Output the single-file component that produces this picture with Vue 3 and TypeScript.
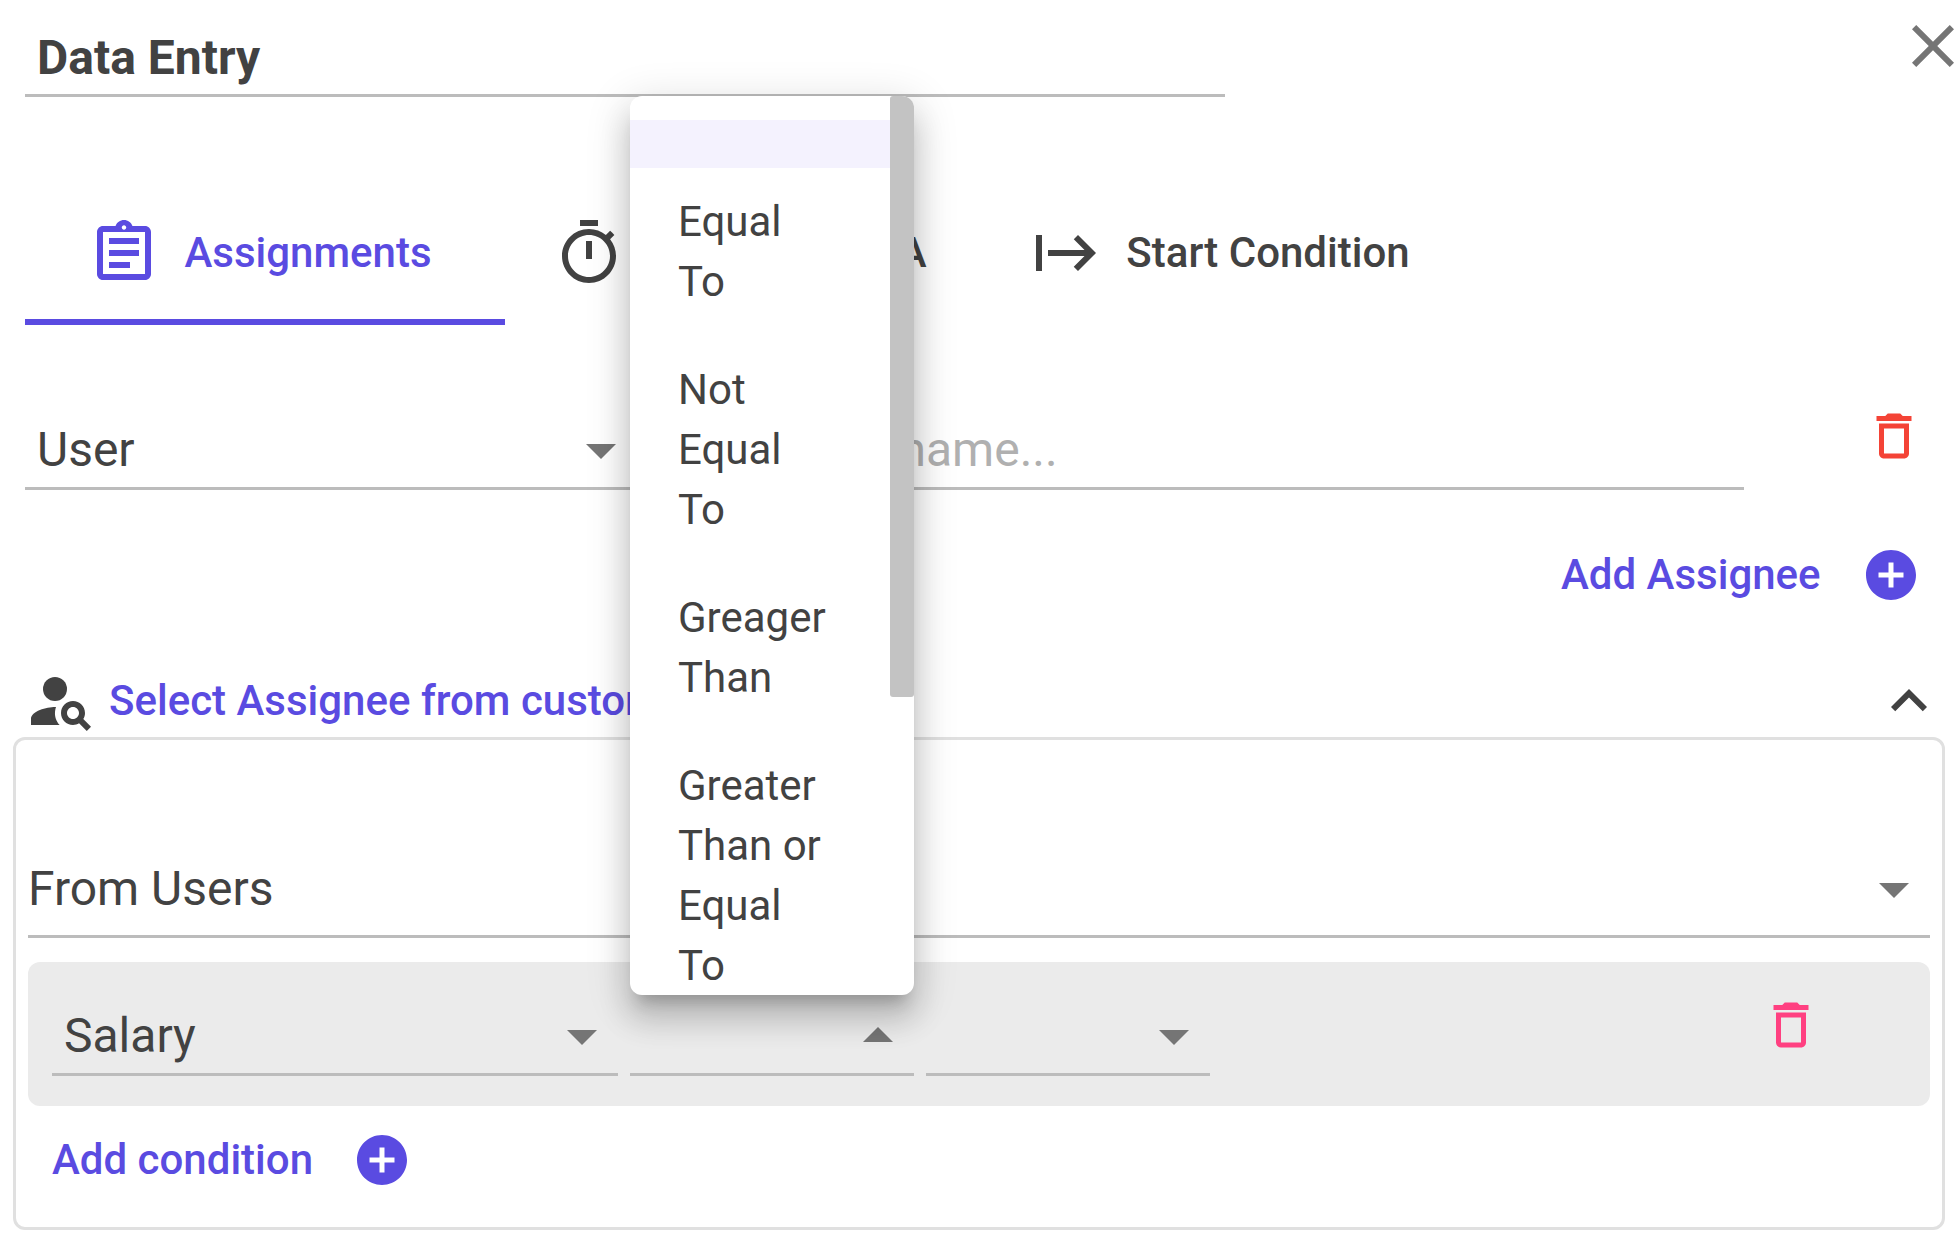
<script setup lang="ts">
import { ref } from 'vue'

interface Tab {
  id: string
  label: string
  icon: string
}

const tabs: Tab[] = [
  {
    id: 'assignments',
    label: 'Assignments',
    icon: 'M7 15h7v2H7zm0-4h10v2H7zm0-4h10v2H7zm12-4h-4.18C14.4 1.84 13.3 1 12 1c-1.3 0-2.4.84-2.82 2H5c-1.1 0-2 .9-2 2v14c0 1.1.9 2 2 2h14c1.1 0 2-.9 2-2V5c0-1.1-.9-2-2-2zm-7-.25c.41 0 .75.34.75.75s-.34.75-.75.75-.75-.34-.75-.75.34-.75.75-.75zM19 19H5V5h14v14z',
  },
  {
    id: 'deadline',
    label: 'Timer and SLA',
    icon: 'M15 1H9v2h6V1zm-4 13h2V8h-2v6zm8.03-6.61 1.42-1.42c-.43-.51-.9-.99-1.41-1.41l-1.42 1.42C16.07 4.74 14.12 4 12 4c-4.97 0-9 4.03-9 9s4.02 9 9 9 9-4.03 9-9c0-2.12-.74-4.07-1.97-5.61zM12 20c-3.87 0-7-3.13-7-7s3.13-7 7-7 7 3.13 7 7-3.13 7-7 7z',
  },
  {
    id: 'start',
    label: 'Start Condition',
    icon: 'M14.59 7.41 18.17 11H6v2h12.17l-3.59 3.59L16 18l6-6-6-6-1.41 1.41zM2 6v12h2V6H2z',
  },
]

const trashIcon =
  'M6 19c0 1.1.9 2 2 2h8c1.1 0 2-.9 2-2V7H6v12zM8 9h8v10H8V9zm7.5-5-1-1h-5l-1 1H5v2h14V4h-3.5z'
const addIcon =
  'M12 2C6.48 2 2 6.48 2 12s4.48 10 10 10 10-4.48 10-10S17.52 2 12 2zm5 11h-4v4h-2v-4H7v-2h4V7h2v4h4v2z'

const operators: string[] = [
  '',
  'Equal\nTo',
  'Not\nEqual\nTo',
  'Greager\nThan',
  'Greater\nThan or\nEqual\nTo',
]

const title = ref('Data Entry')
const activeTab = ref('assignments')
const assigneeType = ref('User')
const assigneeName = ref('')
const source = ref('From Users')
const attribute = ref('Salary')
const operator = ref('')
const operand = ref('')
const menuOpen = ref(true)

function choose(value: string): void {
  operator.value = value
  menuOpen.value = false
}
</script>

<template>
  <main class="dialog">
    <header class="head">
      <input v-model="title" class="title" type="text" aria-label="Step name" />
      <button class="icon-btn close" type="button" aria-label="Close">
        <svg viewBox="5 5 14 14" width="42" height="42">
          <path d="M19 6.41 17.59 5 12 10.59 6.41 5 5 6.41 10.59 12 5 17.59 6.41 19 12 13.41 17.59 19 19 17.59 13.41 12z" />
        </svg>
      </button>
    </header>

    <div class="tabs" role="tablist">
      <button
        v-for="tab in tabs"
        :key="tab.id"
        class="tab"
        :class="{ active: tab.id === activeTab }"
        type="button"
        role="tab"
        :aria-selected="tab.id === activeTab"
        @click="activeTab = tab.id"
      >
        <svg viewBox="0 0 24 24" width="72" height="72"><path :d="tab.icon" /></svg>
        <span>{{ tab.label }}</span>
      </button>
    </div>

    <div class="assignee">
      <div class="field">
        <select v-model="assigneeType" aria-label="Assignee type">
          <option>User</option>
        </select>
        <svg class="arrow" viewBox="0 0 30 18" width="30" height="18"><path d="M0 3h30L15 18z" /></svg>
      </div>
      <div class="field">
        <input v-model="assigneeName" type="text" placeholder="Type user's name..." aria-label="User name" />
      </div>
      <button class="icon-btn red" type="button" aria-label="Remove assignee">
        <svg viewBox="0 0 24 24" width="60" height="60"><path :d="trashIcon" /></svg>
      </button>
    </div>

    <button class="add add-assignee" type="button">
      <span>Add Assignee</span>
      <svg viewBox="0 0 24 24" width="60" height="60"><path :d="addIcon" /></svg>
    </button>

    <button class="section-head" type="button" aria-expanded="true">
      <svg viewBox="0 0 24 24" width="72" height="72">
        <circle cx="10" cy="8" r="4" />
        <path d="M10.35 14.01C7.62 13.91 2 15.27 2 18v2h9.54c-2.47-2.76-1.23-5.89-1.19-5.99zM19.43 18.02C19.79 17.43 20 16.74 20 16c0-2.21-1.79-4-4-4s-4 1.79-4 4 1.79 4 4 4c.74 0 1.43-.22 2.02-.57L20.59 22 22 20.59l-2.57-2.57zM16 18c-1.1 0-2-.9-2-2s.9-2 2-2 2 .9 2 2-.9 2-2 2z" />
      </svg>
      <span>Select Assignee from custom field</span>
      <svg class="chevron" viewBox="0 0 24 24" width="72" height="72">
        <path d="M12 8l-6 6 1.41 1.41L12 10.83l4.59 4.58L18 14z" />
      </svg>
    </button>

    <section class="card">
      <div class="field source">
        <select v-model="source" aria-label="Source">
          <option>From Users</option>
        </select>
        <svg class="arrow" viewBox="0 0 30 18" width="30" height="18"><path d="M0 3h30L15 18z" /></svg>
      </div>

      <div class="condition">
        <div class="field">
          <select v-model="attribute" aria-label="Attribute">
            <option>Salary</option>
          </select>
          <svg class="arrow" viewBox="0 0 30 18" width="30" height="18"><path d="M0 3h30L15 18z" /></svg>
        </div>
        <div class="field">
          <button
            class="opener"
            type="button"
            aria-haspopup="listbox"
            :aria-expanded="menuOpen"
            aria-label="Operator"
            @click="menuOpen = !menuOpen"
          >
            <svg class="arrow" viewBox="0 0 30 18" width="30" height="18"><path d="M0 15h30L15 0z" /></svg>
          </button>
          <div v-if="menuOpen" class="menu">
            <ul role="listbox" aria-label="Operator">
              <li
                v-for="item in operators"
                :key="item"
                role="option"
                :aria-selected="item === operator"
                :class="{ selected: item === operator }"
                @click="choose(item)"
              >{{ item }}</li>
            </ul>
            <span class="thumb"></span>
          </div>
        </div>
        <div class="field">
          <select v-model="operand" aria-label="Value">
            <option value=""></option>
          </select>
          <svg class="arrow" viewBox="0 0 30 18" width="30" height="18"><path d="M0 3h30L15 18z" /></svg>
        </div>
        <button class="icon-btn pink" type="button" aria-label="Remove condition">
          <svg viewBox="0 0 24 24" width="60" height="60"><path :d="trashIcon" /></svg>
        </button>
      </div>

      <button class="add add-condition" type="button">
        <span>Add condition</span>
        <svg viewBox="0 0 24 24" width="60" height="60"><path :d="addIcon" /></svg>
      </button>
    </section>
  </main>
</template>

<style>
body {
  margin: 0;
  background: #fff;
}
</style>

<style scoped>
.dialog {
  display: flex;
  flex-direction: column;
  padding: 0 14px 18px 13px;
  color: #424242;
  font-family: Roboto, 'Liberation Sans', sans-serif;
  font-size: 42px;
  line-height: 60px;
}

.dialog,
.dialog * {
  box-sizing: border-box;
}

button,
input,
select {
  margin: 0;
  padding: 0;
  border: 0;
  border-radius: 0;
  outline: 0;
  background: none;
  color: inherit;
  font: inherit;
}

button {
  cursor: pointer;
}

svg {
  display: block;
  flex: none;
  fill: currentColor;
}

.head {
  display: flex;
  align-items: flex-start;
  justify-content: space-between;
  margin-right: -9px;
  padding-left: 12px;
}

.title {
  flex: 0 1 1200px;
  min-width: 0;
  height: 97px;
  padding: 29px 12px 9px;
  border-bottom: 3px solid #bcbcbc;
  font-size: 48px;
  font-weight: 700;
  line-height: 56px;
}

.icon-btn {
  flex: none;
}

.close {
  margin-top: 25px;
  color: #757575;
}

.tabs {
  display: flex;
  margin: 84px 0 0 12px;
}

.tab {
  display: flex;
  align-items: center;
  justify-content: center;
  gap: 24px;
  width: 480px;
  height: 144px;
  padding: 6px 10px 0 0;
  border-bottom: 6px solid transparent;
  font-weight: 500;
  white-space: nowrap;
}

.tab.active {
  border-bottom-color: #5a4be1;
  color: #5a4be1;
}

.assignee {
  display: grid;
  grid-template-columns: 612fr 1107fr auto;
  align-items: start;
  margin-top: 81px;
  padding: 0 21px 0 12px;
}

.assignee .field {
  margin-top: 16px;
}

.assignee .icon-btn {
  margin-left: 120px;
}

.field {
  display: flex;
  align-items: center;
  position: relative;
  min-width: 0;
  padding: 0 21px 9px 12px;
  border-bottom: 3px solid #bcbcbc;
  font-size: 48px;
  line-height: 56px;
}

.field select,
.field input {
  flex: 1;
  min-width: 0;
  height: 56px;
  appearance: none;
}

.field input::placeholder {
  color: #b0b0b0;
  opacity: 1;
}

.arrow {
  color: #757575;
}

.red {
  color: #f44336;
}

.pink {
  color: #ff4081;
}

.add {
  display: flex;
  align-items: center;
  justify-content: space-between;
  width: 360px;
  color: #5a4be1;
  font-weight: 500;
}

.add-assignee {
  align-self: flex-end;
  margin: 55px 24px 0 0;
}

.section-head {
  display: flex;
  align-items: center;
  gap: 12px;
  margin-top: 60px;
  padding-left: 12px;
  font-weight: 500;
}

.section-head span {
  color: #5a4be1;
}

.chevron {
  margin-left: auto;
}

.card {
  padding: 121px 12px 37px;
  border: 3px solid #e0e0e0;
  border-radius: 12px;
}

.source {
  padding-bottom: 18px;
  padding-left: 0;
}

.condition {
  display: grid;
  grid-template-columns: 566fr 284fr 284fr 599fr;
  align-items: start;
  column-gap: 12px;
  margin-top: 24px;
  padding: 33px 109px 30px 24px;
  border-radius: 12px;
  background: #ebebeb;
}

.condition .field {
  margin-top: 13px;
}

.condition .icon-btn {
  justify-self: end;
}

.opener {
  display: flex;
  flex: 1;
  align-items: center;
  justify-content: flex-end;
  height: 56px;
}

.menu {
  position: absolute;
  right: 0;
  bottom: 78px;
  left: 0;
  height: 899px;
  overflow: hidden;
  border-radius: 12px;
  background: #fff;
  box-shadow:
    0 15px 15px -9px rgba(0, 0, 0, 0.2),
    0 24px 30px 3px rgba(0, 0, 0, 0.14),
    0 9px 42px 6px rgba(0, 0, 0, 0.12);
  font-size: 42px;
  line-height: 60px;
}

.menu ul {
  margin: 0 24px 0 0;
  padding: 24px 0 0;
  list-style: none;
}

.menu li {
  padding: 24px 0 24px 48px;
  white-space: pre-line;
  cursor: pointer;
}

.menu li.selected {
  background: #f4f2fe;
}

.thumb {
  position: absolute;
  top: 0;
  right: 0;
  width: 24px;
  height: 601px;
  border-radius: 3px;
  background: #c3c3c3;
}

.add-condition {
  margin: 24px 0 0 24px;
}
</style>
